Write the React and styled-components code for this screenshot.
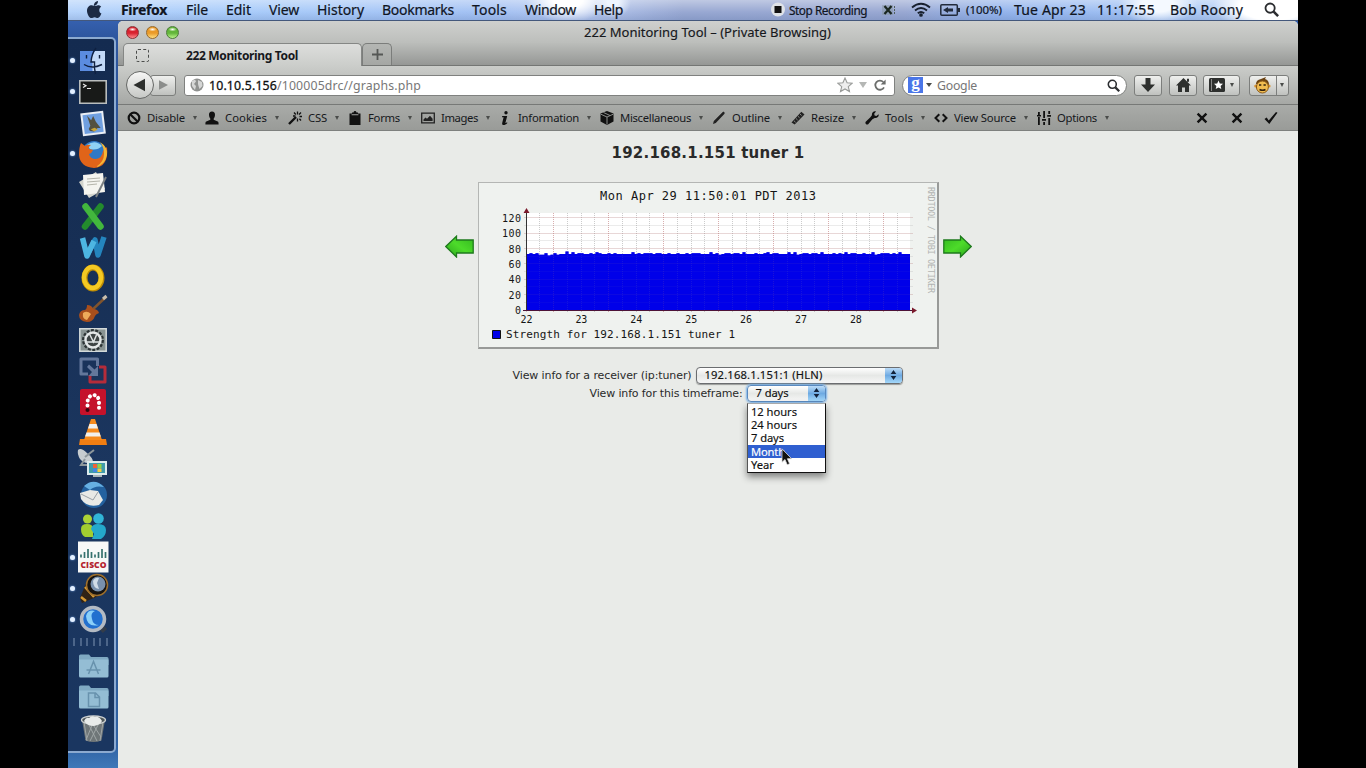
import React, { useLayoutEffect, useRef, useState } from "react";
import styled, { createGlobalStyle, css } from "styled-components";

const GlobalStyle = createGlobalStyle`
  html, body { margin: 0; padding: 0; background: #000; }
  * { box-sizing: border-box; }
  svg { display: block; flex: none; }
`;

const ui = `"Noto Sans", "Open Sans", sans-serif`;
const verdana = `"DejaVu Sans", sans-serif`;

/* ---------- text that keeps a set advance width ---------- */

const Fit = styled.span`
  display: inline-block;
  white-space: pre;
  flex: none;
  width: ${(p) => p.$w}px;
`;

function FitText({ w, children }) {
  const ref = useRef(null);
  const [spacing, setSpacing] = useState(0);
  useLayoutEffect(() => {
    const range = document.createRange();
    range.selectNodeContents(ref.current);
    const natural = range.getBoundingClientRect().width;
    setSpacing((w - natural) / String(children).length);
  }, [w, children]);
  return (
    <Fit ref={ref} $w={w} style={{ letterSpacing: spacing }}>
      {children}
    </Fit>
  );
}

/* ---------- frame ---------- */

const Stage = styled.div`
  width: 1366px;
  height: 768px;
  padding: 0 68px;
  background: #000;
  overflow: hidden;
`;

const Screen = styled.div`
  display: flex;
  flex-direction: column;
  width: 1230px;
  height: 768px;
  font-family: ${ui};
  color: #16181c;
`;

const MenuBar = styled.header`
  display: flex;
  align-items: center;
  height: 21px;
  padding: 0 0 1px 18px;
  border-bottom: 1px solid #44587c;
  font-size: 14px;
  line-height: 20px;
  color: #10151f;
  -webkit-text-stroke: 0.2px #10151f;
  background:
    radial-gradient(ellipse 42px 22px at 500px 0, #fff 0 35%, transparent),
    radial-gradient(ellipse 18px 16px at 545px 2px, #eef5ff 0 30%, transparent),
    radial-gradient(ellipse 40px 20px at 1090px 4px, #f4f9ff 0 40%, transparent),
    radial-gradient(ellipse 60px 26px at 1205px 6px, #fff 0 55%, transparent),
    linear-gradient(rgba(255, 255, 255, 0.38), rgba(255, 255, 255, 0) 60%, rgba(50, 80, 140, 0.16)),
    linear-gradient(90deg, #b5d3fb, #a9ccfa 14%, #a3c1f3 34%, #b6c8ef 42%, #98a8d2 50%, #99a8d2 68%, #94b4ec 76%, #9fc0f3 86%, #c5daf8);
`;

const MenuCell = styled.div`
  display: flex;
  align-items: center;
  flex: none;
  width: ${(p) => p.$w}px;
  font-weight: ${(p) => (p.$bold ? 700 : 400)};
  font-size: ${(p) => p.$size || 14}px;
`;

const Desk = styled.div`
  display: flex;
  flex: 1;
  min-height: 0;
  background: linear-gradient(#3560ae, #26497f 60%, #3f78b8);
`;

const DockStrip = styled.aside`
  width: 50px;
  padding: 16px 2px 15px 0;
  background: linear-gradient(#3560ae, #2d569f 16px, #26497f 60%, #2f62a4 97%, #3f78b8);
`;

const Dock = styled.nav`
  display: flex;
  flex-direction: column;
  height: 716px;
  padding-top: 6px;
  border: 2px solid #8caad0;
  border-left: 0;
  border-radius: 0 5px 5px 0;
  background: linear-gradient(#142b50, #172f55 30%, #1b365f 60%, #1a3660);
`;

const DockSlot = styled.div`
  display: flex;
  align-items: center;
  height: 31.06px;
  flex: none;
`;

const Running = styled.i`
  width: 5px;
  height: 5px;
  margin: 0 4px 0 2px;
  flex: none;
  border-radius: 50%;
  background: ${(p) => (p.$on ? "#e4f0ff" : "transparent")};
  box-shadow: ${(p) => (p.$on ? "0 0 2px #86b4f0" : "none")};
`;

const DockRule = styled.div`
  height: 8px;
  margin: 3px 5px 5px;
  background: repeating-linear-gradient(90deg, #4c6589 0 2px, transparent 2px 6.6px);
`;

/* ---------- browser window ---------- */

const Win = styled.section`
  display: flex;
  flex-direction: column;
  flex: 1;
  min-width: 0;
  border-radius: 5px 5px 0 0;
  overflow: hidden;
  background: #e9ebe8;
`;

const TitleRow = styled.div`
  display: grid;
  grid-template-columns: 90px 1fr 90px;
  align-items: center;
  height: 22px;
  background: linear-gradient(#cfd0ce, #bcbebb);
`;

const Lights = styled.div`
  display: flex;
  gap: 7px;
  padding-left: 8px;
`;

const Light = styled.i`
  width: 13px;
  height: 13px;
  border-radius: 50%;
  border: 1px solid ${(p) => p.$edge};
  background: radial-gradient(ellipse 4px 2px at 50% 22%, #fff, transparent), linear-gradient(${(p) => p.$c}, ${(p) => p.$c} 55%, ${(p) => p.$glow});
`;

const WinTitle = styled.div`
  text-align: left;
  padding-left: 376px;
  font-size: 13px;
  line-height: 20px;
  -webkit-text-stroke: 0.15px #16181c;
`;

const TabRow = styled.div`
  display: flex;
  height: 23px;
  padding: 0 0 0 5px;
  background: linear-gradient(#bbbdba, #959795);
  border-bottom: 1px solid #747674;
`;

const Tab = styled.div`
  display: flex;
  align-items: center;
  width: 239px;
  height: 23px;
  padding: 1px 0 0 12px;
  border: 1px solid #858785;
  border-bottom: 0;
  border-radius: 5px 5px 0 0;
  background: linear-gradient(#dddedc, #cbcdca);
  font-size: 12px;
  font-weight: 700;
`;

const Favicon = styled.i`
  width: 13px;
  height: 13px;
  margin-right: 37px;
  border: 1px dashed #4b4d4b;
  border-radius: 2px;
`;

const NewTab = styled.div`
  display: flex;
  align-items: center;
  justify-content: center;
  width: 30px;
  height: 22px;
  border: 1px solid #7b7d7b;
  border-bottom: 0;
  border-radius: 5px 5px 0 0;
  background: linear-gradient(#b4b6b3, #a5a7a4);
`;

const NavRow = styled.div`
  display: flex;
  align-items: center;
  height: 38px;
  padding: 0 9px 0 8px;
  background: linear-gradient(#cbcdca, #a6a8a5);
`;

const BackButton = styled.div`
  display: flex;
  align-items: center;
  justify-content: center;
  width: 28px;
  height: 28px;
  border: 1px solid #666866;
  border-radius: 50%;
  background: linear-gradient(#f6f6f5, #c6c8c5);
  z-index: 1;
`;

const bevel = css`
  border: 1px solid #7c7e7c;
  border-radius: 3px;
  background: linear-gradient(#eff0ee, #bfc1be);
`;

const ForwardButton = styled.div`
  ${bevel}
  display: flex;
  align-items: center;
  justify-content: center;
  width: 26px;
  height: 21px;
  margin-left: -4px;
`;

const Field = styled.div`
  display: flex;
  align-items: center;
  width: ${(p) => p.$w}px;
  height: 21px;
  margin-left: ${(p) => p.$ml}px;
  padding: 0 6px 0 5px;
  border: 1px solid #7f817f;
  border-radius: ${(p) => (p.$round ? 11 : 3)}px;
  background: #fff;
  font-size: 12.3px;
  line-height: 19px;
  color: #777;
`;

const Host = styled.span`
  display: flex;
  margin-left: 5px;
  color: #101010;
  -webkit-text-stroke: 0.3px #101010;
`;

const FieldIcons = styled.div`
  display: flex;
  align-items: center;
  gap: 6px;
  margin-left: auto;
`;

const SearchEngine = styled.div`
  display: flex;
  align-items: center;
  justify-content: center;
  width: 15px;
  height: 16px;
  background: #4a76e8;
  color: #fff;
  font-family: "Liberation Serif", serif;
  font-weight: 700;
  font-size: 17px;
  line-height: 14px;
  padding-bottom: 4px;
`;

const Hint = styled.span`
  margin-left: 5px;
`;

const NavButton = styled.div`
  ${bevel}
  display: flex;
  align-items: center;
  justify-content: center;
  gap: 4px;
  width: ${(p) => p.$w}px;
  height: 21px;
  margin-left: ${(p) => p.$ml}px;
`;

const SplitMark = styled.span`
  display: flex;
  align-items: center;
  height: 19px;
  margin-left: 1px;
  padding-left: 3px;
  border-left: 1px solid #7c7e7c;
`;

const DevBar = styled.div`
  display: flex;
  align-items: center;
  flex: none;
  height: 27px;
  padding-left: 9px;
  border-top: 1px solid #777977;
  border-bottom: 1px solid #7e807e;
  background: linear-gradient(#a9aba8, #999b98);
  font-size: 11.3px;
  line-height: 20px;
`;

const DevItem = styled.div`
  display: flex;
  align-items: center;
  flex: none;
  gap: 6px;
  width: ${(p) => p.$w}px;
`;

const DevActions = styled.div`
  display: flex;
  gap: 20.5px;
  margin-left: 80px;
`;

const Caret = styled.i`
  flex: none;
  width: 0;
  height: 0;
  margin-left: ${(p) => p.$ml || 0}px;
  border: ${(p) => p.$s || 3}px solid transparent;
  border-top: ${(p) => (p.$s || 3) + 1.5}px solid ${(p) => p.$c || "#4a4c4a"};
  border-bottom: 0;
`;

/* ---------- page ---------- */

const Page = styled.main`
  display: flex;
  flex-direction: column;
  align-items: center;
  flex: 1;
  background: #e9ebe8;
  font-family: ${verdana};
  color: #2a2a2a;
`;

const Heading = styled.h1`
  margin: 11px 0 18px;
  font-size: 15px;
  line-height: 22px;
  font-weight: 700;
`;

const GraphRow = styled.div`
  display: flex;
  align-items: flex-start;
  gap: 4px;
`;

const ArrowBox = styled.div`
  padding-top: 53px;
`;

const GraphPanel = styled.div`
  width: 461px;
  height: 167px;
  padding: 2px 0 0 1px;
  overflow: hidden;
  border: 1px solid #b4b6b4;
  border-right: 2px solid #989a98;
  border-bottom: 2px solid #989a98;
  background: #eff2ef;
`;

const Form = styled.div`
  display: flex;
  flex-direction: column;
  width: 391px;
  margin-top: 17px;
  font-size: 11px;
  line-height: 18px;
`;

const FormRow = styled.div`
  display: flex;
  align-items: center;
  height: 18px;
  padding-left: ${(p) => p.$indent}px;
  gap: 4px;
`;

const FieldLabel = styled.label`
  padding-top: 2px;
`;

const Select = styled.div`
  display: flex;
  align-items: center;
  justify-content: space-between;
  width: ${(p) => p.$w}px;
  height: 17px;
  padding-left: 8px;
  border: 1px solid ${(p) => (p.$focus ? "#5a8ac0" : "#6b6d70")};
  border-radius: 4px;
  overflow: hidden;
  background: linear-gradient(#fff, #e6e8e6 50%, #f6f6f6);
  box-shadow: ${(p) => (p.$focus ? "0 0 2px 1px #79b2ea" : "0 1px 1px #9a9c9a")};
  font-family: ${ui};
  font-size: 11.2px;
  -webkit-text-stroke: 0.15px #111;
  color: #111;
`;

const Stepper = styled.div`
  display: flex;
  align-items: center;
  justify-content: center;
  width: 17px;
  height: 100%;
  background: linear-gradient(#bcdcf8, #6eaae2 50%, #a4d8fa);
`;

const MenuAnchor = styled.div`
  position: relative;
`;

const Options = styled.ul`
  position: absolute;
  top: 18px;
  left: 0;
  width: 79px;
  margin: 0;
  padding: 1px 0;
  list-style: none;
  border: 1px solid #555;
  border-top-color: #aaa;
  border-bottom-color: #111;
  border-right-color: #111;
  background: #fff;
  box-shadow: 0 4px 7px rgba(0, 0, 0, 0.45);
  font-family: ${ui};
`;

const Option = styled.li`
  height: 13.4px;
  padding-left: 3.5px;
  font-size: 11.2px;
  line-height: 13.4px;
  color: ${(p) => (p.$active ? "#fff" : "#111")};
  -webkit-text-stroke: 0.15px ${(p) => (p.$active ? "#fff" : "#111")};
  background: ${(p) => (p.$active ? "#2f5fd0" : "transparent")};
`;

const Pointer = styled.svg`
  position: absolute;
  left: 34px;
  top: 63px;
`;

/* ---------- drawings ---------- */

const APPLE = "M10.9 3.2c.7-.9 1.2-2 1.1-3.2-1.1.1-2.3.7-3 1.6-.7.8-1.3 2-1.1 3.1 1.2.1 2.3-.6 3-1.5zM13.3 9c0-1.7 1-2.8 1.9-3.3-.9-1.2-2.3-1.5-3.2-1.5-1.3 0-2.3.8-3 .8S7 4.2 5.800 4.200C3.300 4.200 1 6.200 1 9.700c0 3.400 2.400 7.300 4.400 7.300 1.200 0 1.700-.8 3.200-.8s1.900.8 3.100.8c1.600 0 3-2.600 3.700-4.400-1.500-.7-2.100-2-2.100-3.600z";

const devIcons = {
  disable: <g fill="none" stroke="#111" strokeWidth="2.2"><circle cx="7" cy="7" r="5.3" /><path d="M3.2 3.2l7.600 7.600" /></g>,
  person: <path fill="#111" d="M7 .5c2 0 3.2 1.3 3 3.4-.1 1.7-.8 2.8-1.3 3.500v1.400l4 1.700c.7.3.9 1 .9 3H.4c0-2 .2-2.700.9-3l4-1.700V7.400C4.800 6.700 4.100 5.600 4 3.900 3.800 1.800 5 .5 7 .5z" />,
  wand: <g stroke="#111" fill="none"><path strokeWidth="2.4" d="M1 13l7-7" /><path strokeWidth="1.3" d="M9.500.5v3M9.500 7.500v3M5 5h2.500M11.500 5.500H14M6 1.500l1.800 2M13 1.500l-2 2M13 9.500l-1.600-1.800" /></g>,
  clip: <path fill="#111" d="M1.500 2.500H4V1.500h1.500C5.700.5 6.200 0 7 0s1.300.5 1.500 1.500H10v1h2.500V14h-11zM3.600 4.200h6.800v-1H3.600z" fillRule="evenodd" />,
  image: <g><path fill="none" stroke="#222" strokeWidth="1.3" d="M.7 2.200h12.600v9.600H.7z" /><path fill="#222" d="M2.500 10V8.500l2-2 1.500 1.300L9 4.700l2.600 3V10z" /></g>,
  info: <path fill="#111" d="M8 0a1.700 1.700 0 110 3.400A1.700 1.700 0 018 0zM4.200 5h5L7.500 11.500c-.1.600.4.700 1.500-.2l.4.600C8 13.500 6.500 14 5.500 13.900c-1.200-.1-1.500-.8-1.300-1.800L5.600 6.200H4z" />,
  box: <g><path fill="#111" d="M7 0l6.500 2.600v7.800L7 14 .5 10.400V2.600z" /><path d="M.8 3.200L7 6l6.200-2.800M7 6v7.500M3.500 1.500L10 4.500" stroke="#999b98" fill="none" strokeWidth=".9" /></g>,
  pencil: <path fill="#222" d="M1 13l.8-3L10.500 1.300c.7-.6 1.300-.6 1.800 0 .5.500.5 1.200 0 1.700L3.800 11.900z" />,
  ruler: <g><path fill="#222" d="M.5 11.500L10.300.8l3.200 2.800L3.700 13.500z" /><path d="M5 7.500l1.600 1.500M7 5.300l1.600 1.500M9 3l1.600 1.500M3 9.800l1.600 1.500" stroke="#a3a5a2" strokeWidth=".8" /></g>,
  wrench: <path fill="#111" d="M13.600 3.200L11.400 5 9.600 4.600 9.200 2.800 11 .4C8.700-.2 6.700 1.300 6.900 4.200L5.400 6.300.7 10.800c-1 1.400.8 3.600 2.500 2.400l4.200-5 2.300-1.300c2.700.4 4.500-1.400 3.900-3.700z" />,
  code: <path fill="none" stroke="#111" strokeWidth="2" d="M5.300 3.200L1.500 7l3.800 3.800M8.700 3.200L12.500 7l-3.800 3.800" />,
  sliders: <g fill="#111"><path d="M1 1h1.800v3H1zM1 6h1.800v8H1zM6.200 0H8v7H6.200zM6.200 11H8v3H6.200zM11.300 0h1.800v3h-1.800zM11.300 7h1.800v7h-1.800z" /><path d="M0 4h4v1.500H0zM5 8h4v1.700H5zM10.200 4h4v1.700h-4z" /></g>,
  cross: <path fill="none" stroke="#111" strokeWidth="2.4" d="M2.600 2.600l8.800 8.800M11.400 2.600l-8.800 8.800" />,
  check: <path fill="#111" d="M.5 8l2.200-1.500 2 3L12 1l1.500.7L5.300 13z" />,
};

const DevIcon = ({ name }) => (
  <svg width="14" height="14" viewBox="0 0 14 14">{devIcons[name]}</svg>
);

const Magnifier = ({ size = 14 }) => (
  <svg width={size} height={size} viewBox="0 0 14 14" fill="none" stroke="#2b2d30">
    <circle cx="5.7" cy="5.7" r="4.3" strokeWidth="1.7" />
    <path d="M9 9l4.200 4.200" strokeWidth="2.4" />
  </svg>
);

const GreenArrow = ({ flip }) => (
  <svg width="29" height="23" viewBox="0 0 29 23">
    <defs>
      <linearGradient id={flip ? "ga" : "gb"} x1="0" y1="0" x2="1" y2="1">
        <stop offset="0" stopColor="#33b81f" />
        <stop offset=".5" stopColor="#4ddb2a" />
        <stop offset="1" stopColor="#2aa51c" />
      </linearGradient>
    </defs>
    <path
      transform={flip ? "translate(29 0) scale(-1 1)" : undefined}
      d="M.8 5h16.700V1.200L28.200 11.500 17.500 22v-4H.8z"
      fill={`url(#${flip ? "ga" : "gb"})`}
      stroke="#1e7a1c"
      strokeWidth="1.3"
    />
  </svg>
);

const folder = (mark) => (
  <g>
    <path fill="#7fa9c2" d="M0 5q0-1.500 1.500-1.500h8.500l2 2.500h16q1.500 0 1.500 1.500V14H0z" />
    <path fill="#94bdd4" d="M0 8.500h29.500V25q0 1.500-1.500 1.500H1.500Q0 26.500 0 25z" />
    <path fill="none" stroke="#6892ad" strokeWidth="1.5" d={mark} />
  </g>
);

const dockApps = [
  { on: true, art: <g><path fill="#5b8ce0" d="M1 5h25v20H1z" /><path fill="#c2d9f8" d="M16 5h10v20H13.500V15h-1.800Q13 9 16 5z" /><path fill="none" stroke="#0f2040" strokeWidth="1.4" d="M17 2Q12.500 8 12 16h3.500q-.5 6 1 12M5 18.500q8 5 18 0M7.500 9v3.500M20.500 9v3.500" /></g> },
  { on: true, art: <g><path fill="#181a18" stroke="#b9bdbd" strokeWidth="1.6" d="M.8 3.800h26.400v22.400H.8z" /><path fill="none" stroke="#e8e8e8" strokeWidth="1.2" d="M4 7l3 1.700L4 10.500M8 11.500h4" /></g> },
  { art: <g transform="rotate(-7 14 15)"><path fill="#e9eef5" d="M2.500 4h23v23h-23z" /><path fill="#6f9fe0" d="M4.500 6h19v19h-19z" /><path fill="#53503f" d="M9 7l3.500 5L15 8l2 6 4 7-3-.5-4 3-4-1-1-2 2-3z" /><path fill="#c7a437" d="M11 21l4-1 3 2-4 1.500z" /></g> },
  { on: true, art: <g><circle cx="15" cy="14" r="12" fill="#2f79c6" /><path fill="#8fd2f5" d="M8 6q8-6 15 1-5 5-12 3z" /><path fill="#e06419" d="M2 4l4 3q3-2 6-1-3 2-2 4l4 1q-1 3-4 4 1 5 7 5 6-1 7-8l4-4q2 20-13 21Q1 28 0 16 0 8 2 4z" /><path fill="#f4b736" d="M21 3q8 5 7 13-2 10-11 12 8-5 8-13 0-7-4-12z" /></g> },
  { art: <g><path fill="#d3d4cd" d="M0 12L17 2l9 17-16 9z" /><path fill="#f4f4ef" d="M4 5l20-2 2 19-21 3z" /><path stroke="#b4b4aa" d="M8 9l13-1M8 12l13-1M8 15l10-1" /><path stroke="#7c8183" strokeWidth="2" d="M27 7L17 27" /></g> },
  { art: <g fill="none" strokeLinecap="round" strokeWidth="6.5"><path stroke="#238b2d" d="M21.500 5.500L6 25.500" /><path stroke="#42b73d" d="M6.500 5.500l15 20" /></g> },
  { art: <g fill="none" strokeLinejoin="round" strokeWidth="5.5"><path stroke="#2485be" d="M8 23l8-15 3 15 6-18" /><path stroke="#4db6e2" d="M3.500 6L8 24l7-15" /></g> },
  { art: <g><ellipse cx="14" cy="15" rx="8.500" ry="10.500" fill="none" stroke="#bd8c05" strokeWidth="6" /><ellipse cx="13.500" cy="14.500" rx="8.500" ry="10.500" fill="none" stroke="#f4c923" strokeWidth="4.5" /></g> },
  { art: <g><path stroke="#80542d" strokeWidth="2.4" d="M13 16L27 3" /><path stroke="#c9bfae" strokeWidth="3" d="M24 5l3.500-3" /><path fill="#a84f1c" d="M8 11q5 0 6 4 5 0 6 4-3 1-4 3-2 6-8 6-8-1-8-7 1-5 6-5 2-1 2-5z" /><path fill="#edab5a" d="M4 19q4-3 8 1l-4 6q-5-1-4-7z" /></g> },
  { art: <g><path fill="#899493" stroke="#d3dada" strokeWidth="1.5" d="M.8 3.800h26.400v22.400H.8z" /><circle cx="14" cy="15" r="8.500" fill="none" stroke="#2d3435" strokeWidth="5" strokeDasharray="2.5 1.300" /><circle cx="14" cy="15" r="7.500" fill="#3d4444" stroke="#e4e8e8" strokeWidth="2.5" /><path stroke="#dde2e2" strokeWidth="1.5" d="M7 17h14M10.500 9l4 8 3-7" fill="none" /></g> },
  { art: <g fill="none" strokeWidth="3" strokeLinejoin="round"><path stroke="#b42c3a" d="M20 11h6v15H11v-7" /><path stroke="#63779b" d="M18.500 10V3H2v15h7" /><path fill="#63779b" stroke="none" d="M19 20V10l-3.500 3.500L10 8.500 8 11l5 5-3.500 4z" /></g> },
  { art: <g><rect x="1" y="2" width="26" height="26" rx="2" fill="#c5122b" /><path fill="none" stroke="#fff" strokeWidth="4" strokeDasharray=".1 4.700" strokeLinecap="round" d="M8.500 18.500v-4q1-6 6-6.500 5 .5 5.500 6.500v10" /><circle cx="8.500" cy="23" r="2" fill="#350610" /></g> },
  { art: <g><path fill="#ef7d12" d="M1 21h26l1 6H0z" /><path fill="#f68b1c" d="M12 1h4l7 21H5z" /><path fill="#f1f1ee" d="M10.500 6h7l1.500 4.500H9zM7.500 14.500h13l1.300 4H6z" /></g> },
  { art: <g><path fill="#c7cdd0" d="M-1 1q3-3 9 3 6 5 6 9-8 3-13-3-3-5-2-9z" /><path stroke="#8d979b" strokeWidth="2" d="M6 10l-4 6h6M6 8l9-7" fill="none" /><rect x="8" y="12" width="20" height="14" fill="#dcebec" /><rect x="10" y="14" width="16" height="10" fill="#3f9caa" /><path fill="#f06238" d="M14 15h4v4h-4z" /><path fill="#92d346" d="M18.500 15h4v4h-4z" /><path fill="#f5ce42" d="M18.500 19.500h4v3.500h-4z" /><path fill="#4487e0" d="M14 19.500h4v3.500h-4z" /><path fill="#a9b6b8" d="M14 26h9v2h-9z" /></g> },
  { art: <g><circle cx="15" cy="15" r="13" fill="#23619f" /><path fill="#67b0e2" d="M5 6q10-9 20 1-9-2-14 3z" /><path fill="#e8e9e6" d="M1 13l10-3 8 1 5 9-4 5q-12 3-18-6z" /><path stroke="#99a0a6" fill="none" d="M2 14l12 6 5-8" /></g> },
  { art: <g><circle cx="8.500" cy="8" r="4.500" fill="#acd336" /><path fill="#a2cd30" d="M2 18q0-5 6-5t6 5v8H6q-4-2-4-8z" /><circle cx="19.500" cy="7.500" r="5.300" fill="#31b5d7" /><path fill="#24a8cc" d="M12 18q1-5 7-5 8 0 8 6 0 6-5 9h-9l2-5z" /></g> },
  { on: true, art: <g><path fill="#f7f8f7" d="M-1-.5h30.500v31H-1z" /><path stroke="#35716d" strokeWidth="1.7" d="M2 12.500v3M5.500 10v6M9 7v9M12.500 10v6M16 12.500v3M19.500 10v6M23 7v9M26.500 10v6" /><text x="1.500" y="25.500" fontFamily="Open Sans, sans-serif" fontWeight="800" fontSize="8.500" textLength="26" fill="#b3232f">CISCO</text></g> },
  { on: true, art: <g><path fill="#302316" d="M8 8l14 14L3 30l-2-5z" /><path stroke="#d59a36" strokeWidth="2.5" d="M2 24l5 4M6 14l9 10" /><circle cx="18" cy="12" r="10.500" fill="#171411" stroke="#9e6f2c" strokeWidth="1.5" /><circle cx="19" cy="11" r="7.500" fill="#7890ac" /><path fill="#d0dce7" d="M14 8q2-4 6-3l-2 5 2 6q-6-1-6-8z" /></g> },
  { on: true, art: <g><path stroke="#343d4a" strokeWidth="6" d="M18 19l8 8" /><circle cx="14" cy="15" r="11.500" fill="#2270cf" stroke="#b3bac3" strokeWidth="3.5" /><path fill="#8bd0f9" d="M7 12q2-7 9-5-5 2-3 8 1 6 7 6-12 3-13-9z" /></g> },
];

const dockPlaces = [
  folder("M9.500 23l5-12.500 5 12.500M7.500 19h14"),
  folder("M9.500 11h7l4 4v9.500h-11zM16 11v4.500h4.500"),
  <g key="trash"><path fill="#6f7678" d="M3 6h23l-3.500 20.500q-8 3-16 0z" /><path stroke="#a0a6a7" strokeWidth="1" fill="none" d="M5 8l3 19M9 9l9 18M14 9l-7 17M20 9l-9 18M24 8l-3 19M13 9l9 14" /><ellipse cx="14.500" cy="6" rx="12" ry="4" fill="#51595b" stroke="#cdd1d1" strokeWidth="1.3" /><path fill="#e8ebea" d="M5 7q2-4 5-3 3-3 6-1 4-1 7 4-2 4-8 5-7 0-10-5z" /></g>,
];

const DockArt = ({ children }) => (
  <svg width="28" height="30" viewBox="0 0 28 30" overflow="visible">{children}</svg>
);

/* ---------- chart ---------- */

const PLOT = { left: 46.5, right: 430, top: 28, base: 125.5 };
const unit = 0.77;
const jitter = [0, 1, 0, 0, 1, 2, 0, 1, 0, 0, 1, 0, -1, 0, 0, 2, 0, 1, 1, 0, 0, 1, 0, 1, 0, 0, 1, 2, 0, 1, 0, 0, 2, 1, 0, 0, 1];

function Chart() {
  const bars = [];
  for (let x = PLOT.left, i = 0; x < PLOT.right; x += 3, i += 1) {
    const early = i > 3 && i < 12 ? -1.2 : 0;
    const level = 73.5 + early + (i === 13 ? 3 : jitter[(i * 7 + (i >> 3)) % jitter.length]);
    bars.push(`L${x} ${PLOT.base - level * unit}H${Math.min(x + 3, PLOT.right)}`);
  }
  const area = `M${PLOT.left} ${PLOT.base}${bars.join("")}V${PLOT.base}z`;
  const cols = Array.from({ length: 28 }, (_, i) => i);
  const rows = Array.from({ length: 13 }, (_, i) => i);
  return (
    <svg width="457" height="162" viewBox="0 0 457 162" fontFamily="DejaVu Sans Mono, monospace" fill="#151515">
      <text x="120" y="15" fontSize="12" textLength="216">Mon Apr 29 11:50:01 PDT 2013</text>
      <path fill="#fff" d={`M${PLOT.left} ${PLOT.top}H${PLOT.right}V${PLOT.base}H${PLOT.left}z`} />
      <path fill="#0000e6" d={area} />
      <g strokeDasharray="1 1">
        {cols.map((i) => (
          <path key={i} d={`M${Math.round(PLOT.left + i * 13.75) - 0.5} ${PLOT.top}V${PLOT.base + 2}`} stroke={i % 4 === 2 ? "#c07878" : "#9a9a9a"} strokeOpacity={i % 4 === 2 ? 0.6 : 0.5} />
        ))}
        {rows.map((i) => (
          <path key={i} d={`M${PLOT.left - 2} ${Math.round(PLOT.base - i * 7.7) - 0.5}H${PLOT.right + 3}`} stroke={i % 2 ? "#9a9a9a" : "#b07878"} strokeOpacity={i % 2 ? 0.4 : 0.6} />
        ))}
      </g>
      <path fill="#0000ea" fillOpacity=".75" d={area} />
      <path stroke="#333" fill="none" d="M46.500 126V27" />
      <path stroke="#4c1338" fill="none" d="M43 125.500H435" />
      <path fill="#7a1a2c" d="M43.500 28h6l-3-5zM432 122.500v6l5-3z" />
      <g fontSize="10" textAnchor="end">
        {[0, 20, 40, 60, 80, 100, 120].map((v) => (
          <text key={v} x="41" y={129.2 - v * unit} textLength={String(v).length * 6.3}>{v}</text>
        ))}
      </g>
      <g fontSize="10" textAnchor="middle">
        {[22, 23, 24, 25, 26, 27, 28].map((d, i) => (
          <text key={d} x={46.5 + i * 54.9} y="138" textLength="12">{d}</text>
        ))}
      </g>
      <path fill="#0000e6" stroke="#111" d="M12.500 145.500h8v8h-8z" />
      <text x="26" y="153" fontSize="11" textLength="229">Strength for 192.168.1.151 tuner 1</text>
      <text transform="translate(447.500 2) rotate(90)" fontSize="8.5" fill="#b2b4b2" textLength="106">RRDTOOL / TOBI OETIKER</text>
    </svg>
  );
}

/* ---------- data ---------- */

const menus = [
  ["Firefox", 46, 65, true], ["File", 22, 40], ["Edit", 25, 43], ["View", 30, 48], ["History", 47, 65],
  ["Bookmarks", 72, 90], ["Tools", 35, 53], ["Window", 51, 69], ["Help", 29, 177],
];

const devMenus = [
  ["disable", "Disable", 38, 78], ["person", "Cookies", 42, 83], ["wand", "CSS", 19, 60], ["clip", "Forms", 32, 73],
  ["image", "Images", 37, 77], ["info", "Information", 61, 102], ["box", "Miscellaneous", 71, 112], ["pencil", "Outline", 38, 79],
  ["ruler", "Resize", 33, 74], ["wrench", "Tools", 28, 69], ["code", "View Source", 62, 103], ["sliders", "Options", 40, 78],
];

const timeframes = [["12 hours", 46], ["24 hours", 46], ["7 days", 33], ["Month", 34], ["Year", 23]];

const Arrows = () => (
  <Stepper>
    <svg width="7" height="10" viewBox="0 0 7 10" fill="#13233c">
      <path d="M3.500 0L6.300 4H.7zM3.500 10L6.300 6H.7z" />
    </svg>
  </Stepper>
);

export default function App() {
  return (
    <Stage>
      <GlobalStyle />
      <Screen>
        <MenuBar>
          <MenuCell $w={35}>
            <svg width="17" height="18" viewBox="0 0 17 18"><path d={APPLE} fill="#1c2a44" /></svg>
          </MenuCell>
          {menus.map(([name, w, cell, bold]) => (
            <MenuCell key={name} $w={cell} $bold={bold}><FitText w={w}>{name}</FitText></MenuCell>
          ))}
          <MenuCell $w={18}>
            <svg width="14" height="15" viewBox="0 0 14 15"><circle cx="7" cy="7.500" r="7" fill="#dfe3e8" /><path fill="#111" d="M3.500 4h7v7h-7z" /></svg>
          </MenuCell>
          <MenuCell $w={92} $size={11.8}><FitText w={78}>Stop Recording</FitText></MenuCell>
          <MenuCell $w={30}>
            <svg width="15" height="12" viewBox="0 0 15 12"><path fill="#8898a8" d="M1 1h11v10H1z" opacity=".6" /><path stroke="#1a2620" strokeWidth="2.2" d="M3.500 2l7 8M10.500 2l-7 8" /><path stroke="#52605c" d="M13.500 2v8" strokeDasharray="2 1" /></svg>
          </MenuCell>
          <MenuCell $w={29}>
            <svg width="20" height="15" viewBox="0 0 20 15" fill="none" stroke="#18202e" strokeWidth="1.9"><path d="M1 5.500Q10-2 19 5.500M4 8.500q6-5 12 0M6.800 11.200q3.200-2.600 6.400 0" /><circle cx="10" cy="13" r=".9" /></svg>
          </MenuCell>
          <MenuCell $w={26}>
            <svg width="21" height="12" viewBox="0 0 21 12"><rect x=".8" y=".8" width="16.500" height="10.400" rx="1" fill="none" stroke="#222b3b" strokeWidth="1.5" /><path fill="#222b3b" d="M18 4h2v4h-2zM3 6l5-3v1.500h5v3H8V9z" /></svg>
          </MenuCell>
          <MenuCell $w={48} $size={11.5}><FitText w={36}>(100%)</FitText></MenuCell>
          <MenuCell $w={83}><FitText w={72}>Tue Apr 23</FitText></MenuCell>
          <MenuCell $w={73}><FitText w={58}>11:17:55</FitText></MenuCell>
          <MenuCell $w={94}><FitText w={73}>Bob Roony</FitText></MenuCell>
          <Magnifier size={15} />
        </MenuBar>
        <Desk>
          <DockStrip>
            <Dock>
              {dockApps.map((app, i) => (
                <DockSlot key={i}><Running $on={app.on} /><DockArt>{app.art}</DockArt></DockSlot>
              ))}
              <DockRule />
              {dockPlaces.map((art, i) => (
                <DockSlot key={i}><Running /><DockArt>{art}</DockArt></DockSlot>
              ))}
            </Dock>
          </DockStrip>
          <Win>
            <TitleRow>
              <Lights>
                <Light $c="#d8222f" $edge="#8a3036" $glow="#ff8d90" />
                <Light $c="#ea9a28" $edge="#96682c" $glow="#ffdf80" />
                <Light $c="#62b53a" $edge="#4a7a38" $glow="#bcf58c" />
              </Lights>
              <WinTitle><FitText w={247}>222 Monitoring Tool – (Private Browsing)</FitText></WinTitle>
            </TitleRow>
            <TabRow>
              <Tab><Favicon /><FitText w={112}>222 Monitoring Tool</FitText></Tab>
              <NewTab>
                <svg width="11" height="11" viewBox="0 0 11 11"><path stroke="#555755" strokeWidth="1.8" d="M5.500 0v11M0 5.500h11" /></svg>
              </NewTab>
            </TabRow>
            <NavRow>
              <BackButton>
                <svg width="14" height="14" viewBox="0 0 14 14"><path fill="#2d2f2d" d="M.5 7L12 .8v12.400z" /></svg>
              </BackButton>
              <ForwardButton>
                <svg width="9" height="10" viewBox="0 0 9 10"><path fill="#8b8d8b" d="M9 5L0 .3v9.400z" /></svg>
              </ForwardButton>
              <Field $w={711} $ml={8}>
                <svg width="14" height="14" viewBox="0 0 14 14"><circle cx="7" cy="7" r="6.500" fill="#8f918f" /><path fill="#d5d6d5" d="M2 3l3-1.500 1 2L4 6l2 2-1 4-3-4zM8 2l4 2 .5 4-3 3-1-3L8 6z" /></svg>
                <Host><FitText w={68}>10.10.5.156</FitText></Host>
                <FitText w={144}>/100005drc//graphs.php</FitText>
                <FieldIcons>
                  <svg width="16" height="16" viewBox="0 0 16 16"><path fill="#eee" stroke="#999b99" strokeWidth="1.1" d="M8 1l2.100 4.700 5.100.5-3.900 3.400 1.200 5L8 12l-4.500 2.600 1.200-5L.8 6.200l5.100-.5z" /></svg>
                  <Caret $s={4.5} $c="#b5b7b5" />
                  <svg width="15" height="14" viewBox="0 0 15 14"><path fill="none" stroke="#6c6e6c" strokeWidth="1.8" d="M10.300 4A4.600 4.600 0 1011 9.300" /><path fill="#6c6e6c" d="M12.600 1.500v5H7.600z" /></svg>
                </FieldIcons>
              </Field>
              <Field $w={225} $ml={7} $round>
                <SearchEngine>g</SearchEngine>
                <Caret $ml={3} $s={3} />
                <Hint><FitText w={40}>Google</FitText></Hint>
                <FieldIcons><Magnifier size={13} /></FieldIcons>
              </Field>
              <NavButton $w={28} $ml={7}>
                <svg width="14" height="14" viewBox="0 0 14 14"><path fill="#2e302e" d="M4.500 0h5v6.500H14L7 14 0 6.500h4.500z" /></svg>
              </NavButton>
              <NavButton $w={28} $ml={7}>
                <svg width="15" height="14" viewBox="0 0 15 14"><path fill="#2e302e" d="M7.500 0L15 7.500h-2V14H9V9.500H6V14H2V7.500H0zM11 .8h2v3h-2z" /></svg>
              </NavButton>
              <NavButton $w={37} $ml={6}>
                <svg width="16" height="14" viewBox="0 0 16 14"><rect width="16" height="14" rx="1.500" fill="#2e302e" /><path stroke="#888" d="M2.500 1v12" /><path fill="#fff" d="M9.500 2.500l1.300 3 3.200.3-2.400 2.100.7 3.200-2.800-1.700-2.800 1.700.7-3.200L5 5.800l3.200-.3z" /></svg>
                <Caret $ml={1} $s={2.8} />
              </NavButton>
              <NavButton $w={40} $ml={9}>
                <svg width="17" height="17" viewBox="0 0 17 17"><path fill="#6b4312" d="M2 7q0-4 5-5l5-2-1 2q4 1 4 6z" /><circle cx="1.800" cy="9" r="1.600" fill="#d69332" /><circle cx="15" cy="9" r="1.600" fill="#d69332" /><ellipse cx="8.400" cy="10" rx="6" ry="6" fill="#f0bc50" stroke="#8a5a1a" /><path stroke="#31200c" strokeWidth="1.5" fill="none" d="M5 8h2.300M9.500 8h2.300M5.500 12.500q3 1.500 6 0" /></svg>
                <SplitMark><Caret $s={2.8} /></SplitMark>
              </NavButton>
            </NavRow>
            <DevBar>
              {devMenus.map(([icon, name, w, cell]) => (
                <DevItem key={name} $w={cell}>
                  <DevIcon name={icon} />
                  <FitText w={w}>{name}</FitText>
                  <Caret $ml={1.5} $s={2.5} />
                </DevItem>
              ))}
              <DevActions>
                <DevIcon name="cross" />
                <DevIcon name="cross" />
                <DevIcon name="check" />
              </DevActions>
            </DevBar>
            <Page>
              <Heading><FitText w={193}>192.168.1.151 tuner 1</FitText></Heading>
              <GraphRow>
                <ArrowBox><GreenArrow flip /></ArrowBox>
                <GraphPanel><Chart /></GraphPanel>
                <ArrowBox><GreenArrow /></ArrowBox>
              </GraphRow>
              <Form>
                <FormRow $indent={0}>
                  <FieldLabel><FitText w={179}>View info for a receiver (ip:tuner)</FitText></FieldLabel>
                  <Select $w={207}><FitText w={118}>192.168.1.151:1 (HLN)</FitText><Arrows /></Select>
                </FormRow>
                <FormRow $indent={77}>
                  <FieldLabel><FitText w={153}>View info for this timeframe:</FitText></FieldLabel>
                  <MenuAnchor>
                    <Select $w={79} $focus><FitText w={33}>7 days</FitText><Arrows /></Select>
                    <Options>
                      {timeframes.map(([name, w]) => (
                        <Option key={name} $active={name === "Month"}><FitText w={w}>{name}</FitText></Option>
                      ))}
                    </Options>
                    <Pointer width="12" height="18" viewBox="0 0 12 18">
                      <path fill="#111" stroke="#ddd" strokeWidth=".8" d="M1 .8v13.400l3-2.700 2.200 5.200 2.400-1-2.200-5h4.200z" />
                    </Pointer>
                  </MenuAnchor>
                </FormRow>
              </Form>
            </Page>
          </Win>
        </Desk>
      </Screen>
    </Stage>
  );
}
